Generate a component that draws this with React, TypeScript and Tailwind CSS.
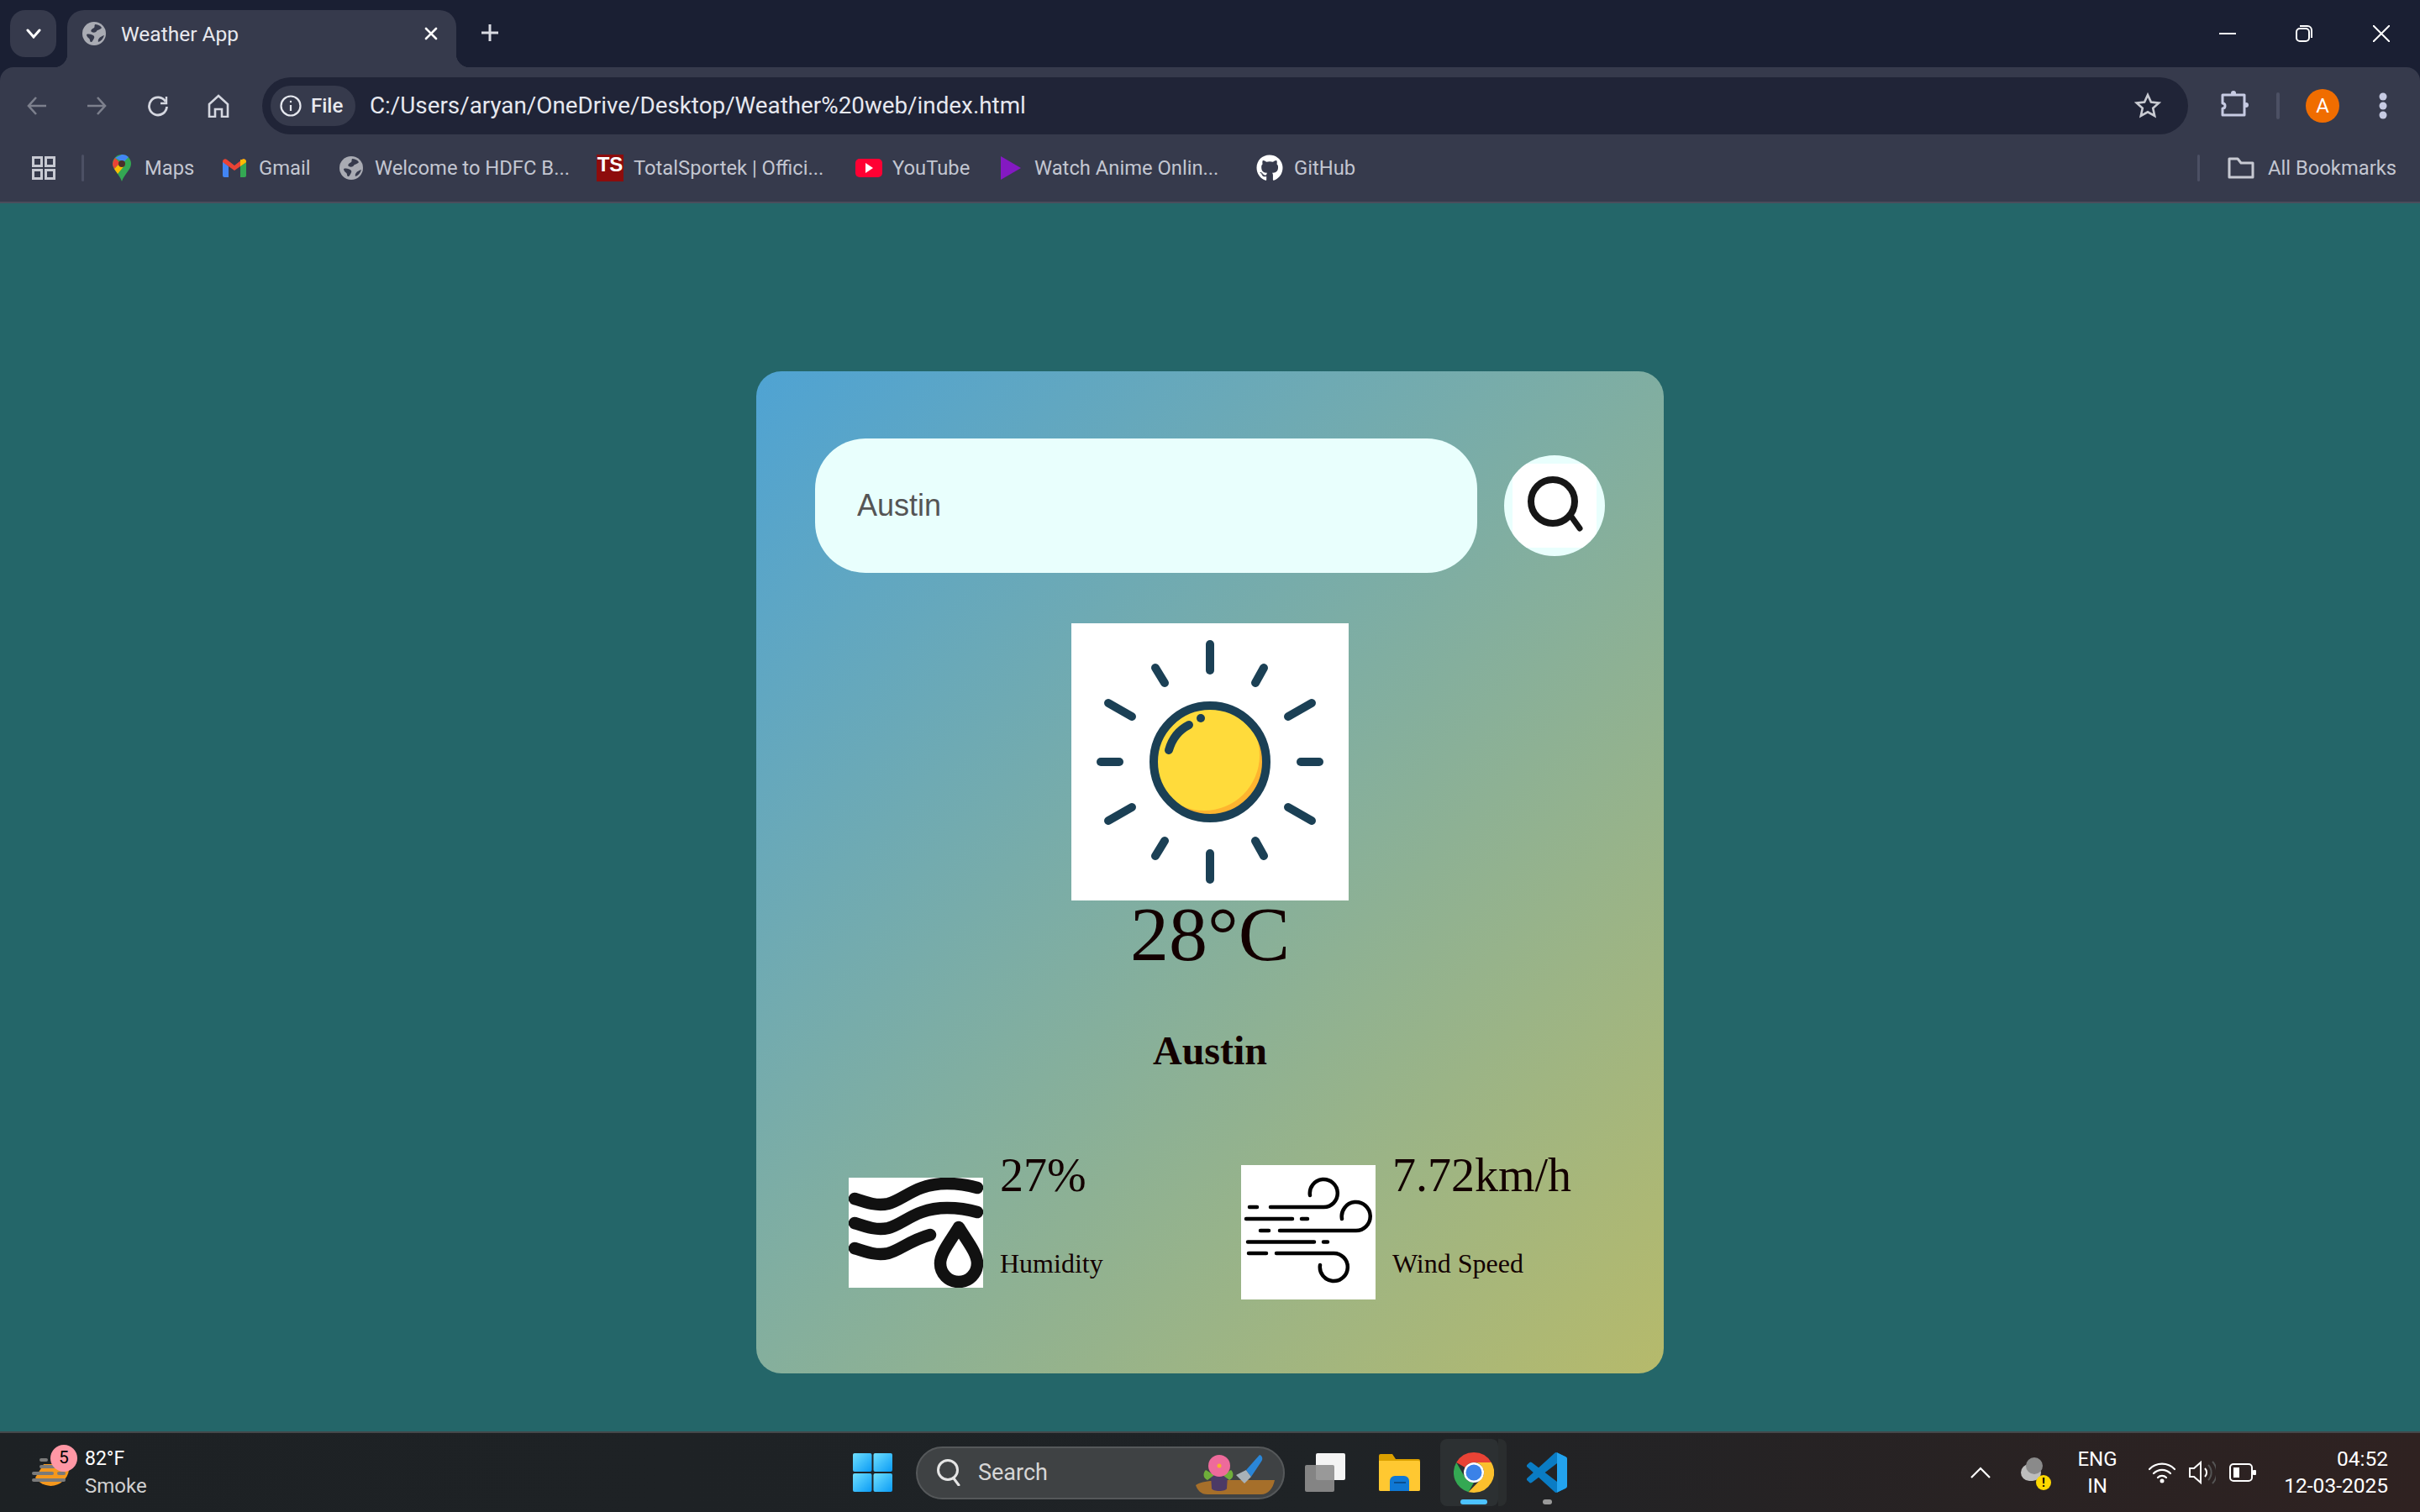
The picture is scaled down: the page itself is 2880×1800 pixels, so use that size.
import React from "react";
import { FaGithub } from "react-icons/fa";

const ui = "font-['Roboto','Liberation_Sans',sans-serif]";

function Globe({ size = 28, fill = "#a9abb3", bg = "#363a4c" }: { size?: number; fill?: string; bg?: string }) {
  return (
    <svg width={size} height={size} viewBox="0 0 28 28" className="shrink-0">
      <circle cx="14" cy="14" r="14" fill={fill} />
      <path d="M15 3 C18 3 21 4 23 7 C21 10 18 9 17 11 C16 13 13 13 11 12 C9 10 12 8 14 7 C15 6 14 5 15 3 Z" fill={bg} />
      <path d="M5 15 C8 14 12 15 14 17 C15 19 13 21 12 23 C11 25 9 24 9 22 C9 19 5 19 5 15 Z" fill={bg} />
      <path d="M26 16 C25 20 22 23 19 24 C18 21 20 18 26 16 Z" fill={bg} />
    </svg>
  );
}

function Bookmark({ label, gap, width }: { label: string; gap: string; width: string }) {
  return <span className={`${gap} ${width} whitespace-nowrap pt-[1px] text-[23.75px] text-[#c3c6d1]`}>{label}</span>;
}

function TabStrip() {
  return (
    <div className="flex h-[80px] shrink-0 items-start">
      <div className="ml-[12px] mt-[12px] flex h-[56px] w-[55px] items-center justify-center rounded-[18px] bg-[#363a4c]">
        <svg width="18" height="12" viewBox="0 0 18 12" fill="none" stroke="#fff" strokeWidth="3" strokeLinecap="round"><path d="M2 2l7 8 7-8" /></svg>
      </div>
      <div className="relative ml-[13px] mt-[12px] flex h-[68px] w-[463px] items-start rounded-t-[20px] bg-[#363a4c] pl-[18px] pt-[14px]">
        <Globe />
        <span className="ml-[18px] text-[24.5px] leading-[30px] text-[#e8e9ee]">Weather App</span>
        <svg className="ml-auto mr-[22px] mt-[6px]" width="16" height="16" viewBox="0 0 16 16" stroke="#fff" strokeWidth="2.6" strokeLinecap="round"><path d="M2 2l12 12M14 2L2 14" /></svg>
        <div className="absolute -left-[16px] bottom-0 h-[16px] w-[16px] bg-[radial-gradient(circle_at_0_0,#1a1f33_16px,#363a4c_16.5px)]" />
        <div className="absolute -right-[16px] bottom-0 h-[16px] w-[16px] bg-[radial-gradient(circle_at_100%_0,#1a1f33_16px,#363a4c_16.5px)]" />
      </div>
      <svg className="ml-[28px] mt-[27px]" width="24" height="24" viewBox="0 0 24 24" stroke="#d8dae2" strokeWidth="3"><path d="M12 2v20M2 12h20" /></svg>
      <div className="ml-auto mt-[30px] flex items-start">
        <svg width="20" height="20" viewBox="0 0 20 20" stroke="#fff" strokeWidth="2"><path d="M0 10h20" /></svg>
        <svg className="ml-[71px]" width="20" height="20" viewBox="0 0 20 20" fill="none" stroke="#fff" strokeWidth="2"><rect x="1" y="4" width="15" height="15" rx="4" /><path d="M5 1h9a5 5 0 0 1 5 5v9" /></svg>
        <svg className="ml-[72px] mr-[36px]" width="20" height="20" viewBox="0 0 20 20" stroke="#fff" strokeWidth="2"><path d="M0 0l20 20M20 0L0 20" /></svg>
      </div>
    </div>
  );
}

function AddressRow() {
  return (
    <div className="flex h-[80px] items-start">
      <svg className="ml-[32px] mt-[34px]" width="24" height="24" viewBox="0 0 24 24" fill="none" stroke="#7d808d" strokeWidth="2.6"><path d="M23 12H2M11 2L2 12l9 10" /></svg>
      <svg className="ml-[47px] mt-[34px]" width="24" height="24" viewBox="0 0 24 24" fill="none" stroke="#7d808d" strokeWidth="2.6"><path d="M1 12h21M13 2l9 10-9 10" /></svg>
      <svg className="ml-[48px] mt-[33px]" width="26" height="26" viewBox="0 0 26 26" fill="none" stroke="#d5d7e0" strokeWidth="2.8"><path d="M22 8A10.5 10.5 0 1 0 23.5 14" /><path d="M23 2v8h-7" strokeWidth="2.4" /></svg>
      <svg className="ml-[46px] mt-[32px]" width="26" height="28" viewBox="0 0 26 28" fill="none" stroke="#d5d7e0" strokeWidth="2.6"><path d="M2 12L13 2l11 10v15h-7v-9H9v9H2z" /></svg>
      <div className="ml-[39px] mt-[12px] flex h-[68px] w-[2292px] items-center rounded-[34px] bg-[#202437] pl-[10px]">
        <div className="flex h-[48px] w-[101px] items-center rounded-[24px] bg-[#363a4c] pl-[11px]">
          <svg width="26" height="26" viewBox="0 0 26 26" fill="none" stroke="#e6e8ef" strokeWidth="2.2"><circle cx="13" cy="13" r="11.5" /><path d="M13 12v7" /><circle cx="13" cy="8" r="1.2" fill="#e6e8ef" stroke="none" /></svg>
          <span className="ml-[11px] text-[24px] font-medium text-[#e8e9ef]">File</span>
        </div>
        <span className="ml-[17px] text-[27.8px] text-[#e6e8ef]">C:/Users/aryan/OneDrive/Desktop/Weather%20web/index.html</span>
        <svg className="ml-auto mr-[32px]" width="32" height="32" viewBox="0 0 32 32" fill="none" stroke="#c9cbd2" strokeWidth="2.6" strokeLinejoin="miter"><path d="M16 3l3.9 8.6 9.3 1-7 6.2 2 9.2-8.2-4.7L7.8 28l2-9.2-7-6.2 9.3-1z" /></svg>
      </div>
      <svg className="ml-[38px] mt-[28px]" width="34" height="34" viewBox="0 0 34 34" fill="none" stroke="#c7cbe3" strokeWidth="3" strokeLinejoin="round"><path d="M3 5h26v24H3V21c4 0 4-6 0-6z" /><circle cx="16" cy="3" r="3" fill="#c7cbe3" stroke="none" /><circle cx="31" cy="17" r="3" fill="#c7cbe3" stroke="none" /></svg>
      <div className="ml-[33px] mt-[30px] h-[32px] w-[4px] rounded bg-[#4c5064]" />
      <div className="ml-[31px] mt-[26px] flex h-[40px] w-[40px] items-center justify-center rounded-full bg-[#f06d00] text-[24px] text-white">A</div>
      <div className="ml-[49px] mt-[32px] flex flex-col gap-[5px]">
        <div className="h-[6px] w-[6px] scale-150 rounded-full bg-[#c7cbe3]" />
        <div className="h-[6px] w-[6px] scale-150 rounded-full bg-[#c7cbe3]" />
        <div className="h-[6px] w-[6px] scale-150 rounded-full bg-[#c7cbe3]" />
      </div>
    </div>
  );
}

function BookmarksRow() {
  return (
    <div className="flex h-[80px] items-center">
      <svg className="ml-[38px]" width="28" height="28" viewBox="0 0 28 28" fill="none" stroke="#c7c9d2" strokeWidth="3"><rect x="1.5" y="1.5" width="10" height="10" /><rect x="16.5" y="1.5" width="10" height="10" /><rect x="1.5" y="16.5" width="10" height="10" /><rect x="16.5" y="16.5" width="10" height="10" /></svg>
      <div className="ml-[31px] h-[32px] w-[3px] rounded bg-[#4c5064]" />
      <svg className="ml-[34px] shrink-0" width="22" height="32" viewBox="0 0 22 32">
        <path d="M11 0a11 11 0 0 1 11 11c0 7-8 12-11 21C8 23 0 18 0 11A11 11 0 0 1 11 0z" fill="#34a853" />
        <path d="M3 4L11 0a11 11 0 0 1 8 3l-6 6z" fill="#4285f4" />
        <path d="M0 11a11 11 0 0 1 3-7l6 6-7 7c-1-2-2-4-2-6z" fill="#ea4335" />
        <path d="M2 17l7-7 6 2-9 11c-1-2-3-4-4-6z" fill="#fbbc04" />
        <circle cx="11" cy="11" r="4" fill="#4a2f2a" />
      </svg>
      <Bookmark label="Maps" gap="ml-[16px]" width="w-[57px]" />
      <svg className="ml-[36px] shrink-0" width="28" height="22" viewBox="0 0 28 22">
        <path d="M0 3v17a2 2 0 0 0 2 2h5V9z" fill="#4285f4" />
        <path d="M28 3v17a2 2 0 0 1-2 2h-5V9z" fill="#34a853" />
        <path d="M0 3a3 3 0 0 1 5-2l9 7 9-7a3 3 0 0 1 5 2v1l-7 5-7 5-7-5-7-5z" fill="#ea4335" />
        <path d="M21 1l2 0a3 3 0 0 1 5 2v1l-7 5z" fill="#fbbc04" />
      </svg>
      <Bookmark label="Gmail" gap="ml-[15px]" width="w-[60px]" />
      <div className="ml-[36px]"><Globe /></div>
      <Bookmark label="Welcome to HDFC B..." gap="ml-[14px]" width="w-[232px]" />
      <div className="ml-[32px] flex h-[32px] w-[32px] shrink-0 items-start justify-center bg-[#8d0c0c] font-['Liberation_Sans',sans-serif] text-[24px] font-bold leading-[24px] text-white">TS</div>
      <Bookmark label="TotalSportek | Offici..." gap="ml-[12px]" width="w-[225px]" />
      <div className="ml-[39px] flex h-[22px] w-[32px] shrink-0 items-center justify-center rounded-[5px] bg-[#ff0033]">
        <svg width="10" height="12" viewBox="0 0 10 12"><path d="M1 0l9 6-9 6z" fill="#fff" /></svg>
      </div>
      <Bookmark label="YouTube" gap="ml-[12px]" width="w-[91px]" />
      <svg className="ml-[38px] shrink-0" width="24" height="28" viewBox="0 0 24 28"><path d="M0 0l24 14L0 28z" fill="#8419c2" /></svg>
      <Bookmark label="Watch Anime Onlin..." gap="ml-[16px]" width="w-[222px]" />
      <FaGithub className="ml-[42px] shrink-0 text-white" size={32} />
      <Bookmark label="GitHub" gap="ml-[13px]" width="w-[75px]" />
      <div className="ml-auto h-[32px] w-[3px] rounded bg-[#4c5064]" />
      <svg className="ml-[33px] shrink-0" width="32" height="26" viewBox="0 0 32 26" fill="none" stroke="#c7c9d2" strokeWidth="3" strokeLinejoin="round"><path d="M2 2h10l4 5h14v17H2z" /></svg>
      <span className="ml-[16px] mr-[28px] whitespace-nowrap pt-[1px] text-[23.75px] text-[#c3c6d1]">All Bookmarks</span>
    </div>
  );
}

function Sun() {
  const rays = [
    [165, 25, 165, 56], [165, 274, 165, 305], [35, 165, 57, 165], [273, 165, 295, 165],
    [100, 53, 111, 71], [229, 53, 219, 71], [44, 95, 72, 111], [286, 95, 258, 111],
    [44, 235, 72, 219], [286, 235, 258, 219], [111, 259, 100, 277], [219, 259, 229, 277],
  ];
  return (
    <svg width="330" height="330" viewBox="0 0 330 330" className="bg-white">
      <defs><clipPath id="sunclip"><circle cx="165" cy="165" r="66" /></clipPath></defs>
      <g stroke="#1b4055" strokeWidth="10" strokeLinecap="round">
        {rays.map((r, i) => <line key={i} x1={r[0]} y1={r[1]} x2={r[2]} y2={r[3]} />)}
      </g>
      <circle cx="165" cy="165" r="66" fill="#feb42f" />
      <g clipPath="url(#sunclip)"><circle cx="158" cy="157" r="66" fill="#ffdb3b" /></g>
      <circle cx="165" cy="165" r="67" fill="none" stroke="#1b4055" strokeWidth="10" />
      <path d="M116 151C120 137 128 127 140 121" fill="none" stroke="#1b4055" strokeWidth="10" strokeLinecap="round" />
      <circle cx="154" cy="113" r="5" fill="#1b4055" />
    </svg>
  );
}

function HumidityIcon() {
  return (
    <svg width="160" height="131" viewBox="0 0 160 131" className="shrink-0 bg-white" fill="none" stroke="#111" strokeWidth="14.5" strokeLinecap="round">
      <path d="M7 25C22 30 34 34 47 31C66 26 80 7 117 7C130 7 143 9 153 12" />
      <path d="M7 54C22 59 34 63 47 60C66 55 80 36 117 36C130 36 143 38 153 41" />
      <path d="M7 84C22 89 34 93 47 90C62 86 72 75 97 68" />
      <path d="M131 59C120 77 109 90 109 102a22 22 0 0 0 44 0C153 90 142 77 131 59Z" strokeLinejoin="round" />
    </svg>
  );
}

function WindIcon() {
  return (
    <svg width="160" height="160" viewBox="0 0 160 160" className="shrink-0 bg-white" fill="none" stroke="#000" strokeWidth="4.5" strokeLinecap="round">
      <path d="M10 50h9M35 50h63A16.5 16.5 0 1 0 82 36" />
      <path d="M6 64h55M72 64h7" />
      <path d="M23 78h10M46 78h90A17 17 0 1 0 120 64" />
      <path d="M8 91.500h79M98 91.500h5" />
      <path d="M9 105h21M42 105h68A16.500 16.500 0 1 1 94 119" />
    </svg>
  );
}

function SearchGlyph() {
  return (
    <svg width="100" height="100" viewBox="0 0 100 100" className="bg-white" fill="none" stroke="#161616" strokeWidth="8" strokeLinecap="round">
      <circle cx="48" cy="45" r="26" />
      <path d="M70 63l10 14" strokeWidth="7" />
    </svg>
  );
}

function Card() {
  return (
    <div className="flex h-[1193px] w-[1080px] flex-col items-center rounded-[30px] bg-[linear-gradient(135deg,#4fa3d3,#b6ba6b)] pt-[80px] font-['Liberation_Serif',serif] text-[#130000]">
      <div className="flex w-full items-center justify-between px-[70px]">
        <input readOnly value="Austin" className="h-[160px] w-[788px] rounded-[60px] bg-[#e9fffd] pl-[50px] font-['Liberation_Sans',sans-serif] text-[36px] text-[#555] outline-none" />
        <button className="flex h-[120px] w-[120px] items-center justify-center overflow-hidden rounded-full bg-[#e9fffd]">
          <SearchGlyph />
        </button>
      </div>
      <div className="mt-[60px] flex"><Sun /></div>
      <div className="text-[92px] leading-[80px]">28°C</div>
      <div className="mt-[63px] text-[48px] font-bold">Austin</div>
      <div className="mt-[70px] flex w-full items-start px-[110px]">
        <div className="flex h-[220px] w-[469px] items-center gap-[19px]">
          <HumidityIcon />
          <div className="flex h-[220px] flex-col pl-[1px]">
            <div className="text-[56px]">27%</div>
            <div className="mt-[39px] text-[32px]">Humidity</div>
          </div>
        </div>
        <div className="flex h-[220px] items-center gap-[20px]">
          <WindIcon />
          <div className="flex h-[220px] flex-col">
            <div className="whitespace-nowrap text-[56px]">7.72km/h</div>
            <div className="mt-[39px] whitespace-nowrap text-[32px]">Wind Speed</div>
          </div>
        </div>
      </div>
    </div>
  );
}

function ChromeLogo({ size = 48 }: { size?: number }) {
  return (
    <svg width={size} height={size} viewBox="0 0 48 48" className="shrink-0">
      <path d="M24 0a24 24 0 0 1 20.800 12H24a12 12 0 0 0-10.400 6L3.200 12A24 24 0 0 1 24 0z" fill="#e94335" />
      <path d="M3.200 12l10.400 18a12 12 0 0 0 10.400 6L17.600 47.200A24 24 0 0 1 3.200 12z" fill="#34a853" />
      <path d="M44.800 12A24 24 0 0 1 24 48l-6.400-.800L34.400 30A12 12 0 0 0 24 12z" fill="#fbc02d" />
      <circle cx="24" cy="24" r="12" fill="#fff" />
      <circle cx="24" cy="24" r="9.500" fill="#3b82e8" />
    </svg>
  );
}

function Taskbar() {
  return (
    <div className={`flex h-[96px] shrink-0 items-center border-t-2 border-[#44484a] bg-[linear-gradient(90deg,#1d2124,#1f2326_55%,#2f2221)] ${ui} text-white`}>
      <div className="relative ml-[38px] h-[56px] w-[48px]">
        <svg width="48" height="50" viewBox="0 0 48 50" className="absolute left-0 top-[6px]">
          <path d="M4 28a22 22 0 0 0 40 -16H14z" fill="#f5981d" />
          <g fill="#7a7a7a"><rect x="9" y="5" width="10" height="4" rx="2" /><rect x="9" y="13" width="39" height="4" rx="2" /><rect x="0" y="21" width="26" height="4" rx="2" /><rect x="30" y="21" width="10" height="4" rx="2" /><rect x="0" y="29" width="40" height="4" rx="2" /></g>
        </svg>
        <div className="absolute -top-[5px] left-[22px] flex h-[32px] w-[32px] items-center justify-center rounded-full bg-[#ff97a5] text-[21px] text-black">5</div>
      </div>
      <div className="ml-[15px] flex w-[120px] flex-col leading-[32px]">
        <span className="text-[23px] text-white">82°F</span>
        <span className="text-[24px] text-[#d0d0d0]">Smoke</span>
      </div>
      <svg className="ml-[794px] shrink-0" width="47" height="46" viewBox="0 0 47 46">
        <defs><linearGradient id="win" x1="0" y1="0" x2="1" y2="1"><stop offset="0" stopColor="#6fe0ff" /><stop offset="1" stopColor="#0a9bf5" /></linearGradient></defs>
        <g fill="url(#win)"><rect x="0" y="0" width="22.500" height="22" rx="2" /><rect x="24.500" y="0" width="22.500" height="22" rx="2" /><rect x="0" y="24" width="22.500" height="22" rx="2" /><rect x="24.500" y="24" width="22.500" height="22" rx="2" /></g>
      </svg>
      <div className="relative ml-[28px] flex h-[63px] w-[439px] shrink-0 items-center rounded-[32px] border-2 border-[#55585a] bg-[#3f4244] pl-[22px]">
        <svg width="30" height="32" viewBox="0 0 30 32" fill="none" stroke="#e5e5e5" strokeWidth="3" strokeLinecap="round"><circle cx="14" cy="13" r="11.500" /><path d="M21 23l6 8" /></svg>
        <span className="ml-[20px] text-[27px] text-[#d6d6d6]">Search</span>
        <svg className="absolute right-[8px] top-[8px]" width="96" height="48" viewBox="0 0 96 48">
          <path d="M0 36C8 30 30 30 50 30L94 30C92 40 86 47 78 47L14 47C6 47 2 42 0 36Z" fill="#a66f2a" />
          <path d="M18 24h20l-1 16c-1 4-17 4-18 0z" fill="#4c3a66" />
          <path d="M12 18c-4 4-3 10 2 12l8-6zM42 18c4 4 3 10-2 12l-8-6z" fill="#6fae3a" />
          <circle cx="28" cy="13" r="13" fill="#ee6a9b" />
          <circle cx="28" cy="13" r="2.500" fill="#f5b42a" />
          <path d="M48 24l10 10 8-8-6-8z" fill="#a8b2b8" />
          <path d="M60 18L76 0c4 1 4 6 2 8L66 26z" fill="#2a86d8" />
        </svg>
      </div>
      <div className="relative ml-[24px] h-[46px] w-[48px] shrink-0">
        <div className="absolute right-0 top-0 h-[32px] w-[35px] rounded-[2px] bg-[#f4f4f4]" />
        <div className="absolute bottom-0 left-0 h-[32px] w-[35px] rounded-[2px] bg-[#8f8f8f]/90" />
      </div>
      <svg className="ml-[40px] shrink-0" width="49" height="44" viewBox="0 0 49 44">
        <path d="M0 2a2 2 0 0 1 2-2h14l4 6h27a2 2 0 0 1 2 2v34a2 2 0 0 1-2 2H2a2 2 0 0 1-2-2z" fill="#dba000" />
        <path d="M0 8h47a2 2 0 0 1 2 2v32a2 2 0 0 1-2 2H2a2 2 0 0 1-2-2z" fill="#ffc831" />
        <path d="M13 44V32a6 6 0 0 1 6-6h11a6 6 0 0 1 6 6v12z" fill="#0f78d4" />
        <rect x="18" y="33" width="14" height="2" fill="#0a4f8f" />
      </svg>
      <div className="relative ml-[24px] flex h-[80px] w-[69px] shrink-0 flex-col items-center rounded-[8px] bg-[#2c3032] pl-[10px]">
        <div className="absolute -right-[10px] top-0 h-[80px] w-[10px] rounded-r-[8px] bg-[#2a2d2e]" />
        <div className="mt-[16px]"><ChromeLogo /></div>
        <div className="mt-[8px] h-[6px] w-[32px] rounded-full bg-[#4cc2ff]" />
      </div>
      <div className="ml-[34px] flex h-[80px] w-[48px] shrink-0 flex-col items-center">
        <svg className="mt-[16px]" width="48" height="48" viewBox="0 0 24 24">
          <path fill="#0a7cc4" d="M23.15 2.587L18.21.21a1.494 1.494 0 0 0-1.705.29l-9.46 8.63-4.12-3.128a.999.999 0 0 0-1.276.057L.327 7.261A1 1 0 0 0 .326 8.74L3.899 12 .326 15.26a1 1 0 0 0 .001 1.479L1.65 17.94a.999.999 0 0 0 1.276.057l4.12-3.128 9.46 8.63a1.492 1.492 0 0 0 1.704.29l4.942-2.377A1.5 1.5 0 0 0 24 20.06V3.939a1.5 1.5 0 0 0-.85-1.352zm-5.146 14.861L10.826 12l7.178-5.448v10.896z" />
          <path fill="#23a3ee" d="M18 .1l5.150 2.487A1.500 1.500 0 0 1 24 3.939V20.060a1.500 1.500 0 0 1-.85 1.352L18 23.900z" />
        </svg>
        <div className="mt-[8px] h-[6px] w-[11px] rounded-full bg-[#9a9a9a]" />
      </div>
      <svg className="ml-[480px] shrink-0" width="24" height="14" viewBox="0 0 24 14" fill="none" stroke="#fff" strokeWidth="2.200"><path d="M1 13L12 2l11 11" /></svg>
      <div className="relative ml-[36px] h-[36px] w-[32px] shrink-0">
        <div className="absolute left-0 top-[8px] h-[20px] w-[24px] rounded-full bg-[#bdbdbd]" />
        <div className="absolute left-[6px] top-0 h-[20px] w-[20px] rounded-full bg-[#8a8a8a]" />
        <div className="absolute -bottom-[3px] -right-[4px] flex h-[18px] w-[18px] items-center justify-center rounded-full bg-[#ffd800] text-[14px] font-bold leading-none text-black">!</div>
      </div>
      <div className="ml-[29px] flex w-[60px] shrink-0 flex-col items-center text-[24px] leading-[32px]">
        <span>ENG</span>
        <span>IN</span>
      </div>
      <svg className="ml-[31px] shrink-0" width="32" height="26" viewBox="0 0 32 26" fill="none" stroke="#fff" strokeWidth="2.200" strokeLinecap="round"><path d="M1 9a21 21 0 0 1 30 0M6 14a14 14 0 0 1 20 0M11 19a7 7 0 0 1 10 0" /><circle cx="16" cy="23" r="2.500" fill="#fff" stroke="none" /></svg>
      <svg className="ml-[16px] shrink-0" width="32" height="30" viewBox="0 0 32 30" fill="none" stroke="#fff" strokeWidth="2"><path d="M1 10h5l8-7v24l-8-7H1z" /><path d="M19 10a7 7 0 0 1 0 10" /><path d="M23 6a13 13 0 0 1 0 18M28 2a19 19 0 0 1 0 26" stroke="#555" /></svg>
      <svg className="ml-[16px] shrink-0" width="32" height="22" viewBox="0 0 32 22" fill="none" stroke="#fff" strokeWidth="2"><rect x="1" y="1" width="26" height="20" rx="4" /><rect x="5" y="5" width="7" height="12" fill="#fff" stroke="none" /><rect x="28" y="8" width="4" height="6" rx="1" fill="#fff" stroke="none" /></svg>
      <div className="ml-auto mr-[38px] flex flex-col items-end text-[24.5px] leading-[32px]">
        <span>04:52</span>
        <span>12-03-2025</span>
      </div>
    </div>
  );
}

export default function App() {
  return (
    <div className="flex h-screen w-full flex-col overflow-hidden bg-[#246669]">
      <div className={`shrink-0 bg-[#1a1f33] ${ui}`}>
        <TabStrip />
        <div className="h-[162px] rounded-t-[16px] border-b-2 border-[#4a4d5c] bg-[#363a4c]">
          <AddressRow />
          <BookmarksRow />
        </div>
      </div>
      <main className="flex flex-1 justify-center pt-[200px]">
        <Card />
      </main>
      <Taskbar />
    </div>
  );
}
